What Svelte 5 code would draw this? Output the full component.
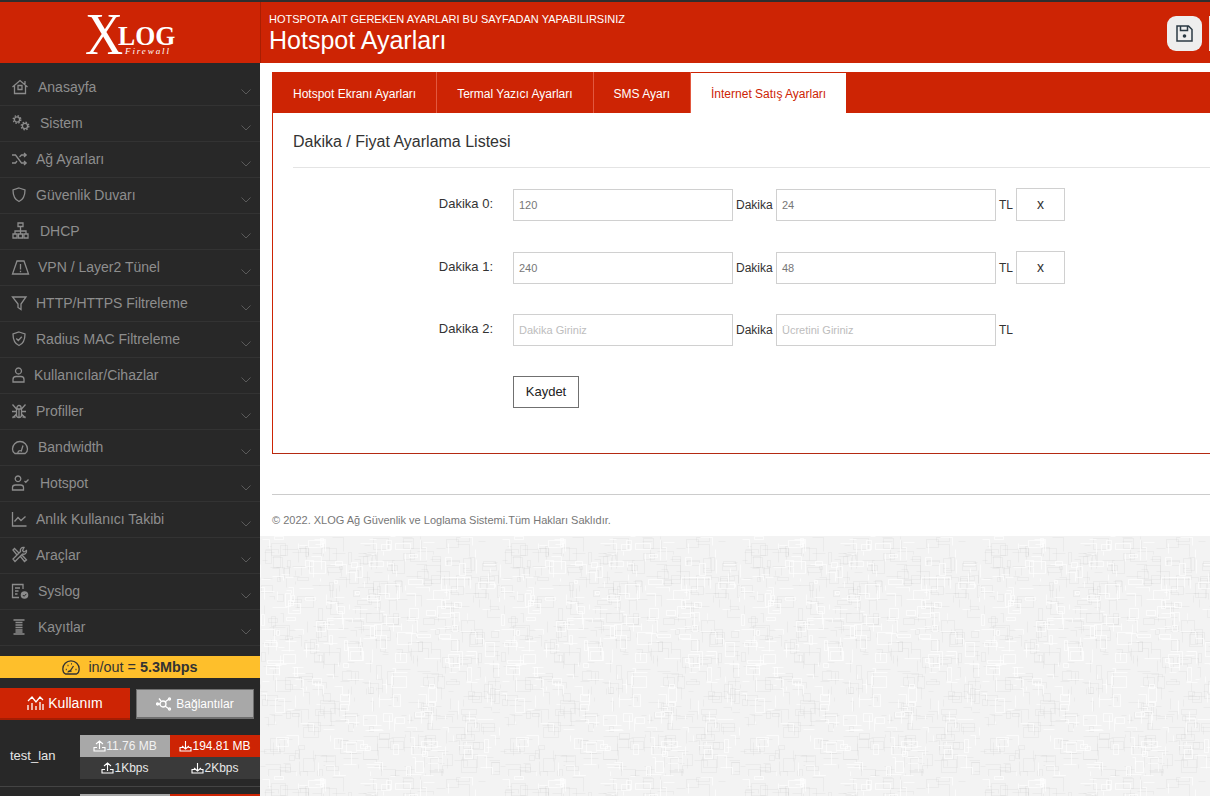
<script>
  const nav = [
    { t: 'Anasayfa', x: 38, i: 'home' }, { t: 'Sistem', x: 40, i: 'gears' }, { t: 'Ağ Ayarları', x: 36, i: 'shuffle' },
    { t: 'Güvenlik Duvarı', x: 36, i: 'shield' }, { t: 'DHCP', x: 40, i: 'net' }, { t: 'VPN / Layer2 Tünel', x: 38, i: 'warn' },
    { t: 'HTTP/HTTPS Filtreleme', x: 36, i: 'filter' }, { t: 'Radius MAC Filtreleme', x: 36, i: 'shieldc' },
    { t: 'Kullanıcılar/Cihazlar', x: 34, i: 'user' }, { t: 'Profiller', x: 36, i: 'bug' }, { t: 'Bandwidth', x: 38, i: 'gauge' },
    { t: 'Hotspot', x: 40, i: 'userc' }, { t: 'Anlık Kullanıcı Takibi', x: 36, i: 'chart' }, { t: 'Araçlar', x: 36, i: 'tools' },
    { t: 'Syslog', x: 38, i: 'doc' }, { t: 'Kayıtlar', x: 38, i: 'spool' }
  ];
  const paths = {
    home: 'M.5 8 8 1.500 15.500 8M2.500 6.500V14.500h11V6.500M13 2v3M6 6.500h4v4H6z',
    gears: '',
    shuffle: 'M0 4h3.500l6 8H14M0 12h3.500l1.500-2M7.500 6l2-2H14M12 2l2.200 2L12 6M12 10l2.200 2L12 14',
    shield: 'M7 1 13 3c0 5.500-1.500 9.500-6 11.500C2.500 12.500 1 8.500 1 3Z',
    net: 'M6 0h5v3.500H6zM1 11h4v4H1zM6.500 11h4v4h-4zM12 11h4v4h-4zM8.500 3.500V8M3 11V8h11v3M8.500 8v3',
    warn: 'M5 2h7l4.500 13H.5ZM8.500 5v5.500M8.500 11.800v1.500',
    filter: 'M.5 2h13.500L9 9v5.500L6 12.500V9Z',
    shieldc: 'M7 1 13 3c0 5.500-1 9.500-6 11.500C2 12.500 1 8.500 1 3ZM4.300 7.500 6.300 9.500 9.800 5.800',
    user: 'M6.500 1a3 3 0 1 0 .01 0M1 15v-2.500c0-2 1.500-3 3-3h5c1.500 0 3 1 3 3V15Z',
    bug: 'M4.500 6h5v6a2.500 2.500 0 0 1-5 0ZM5 6V4.500a2 2 0 0 1 4 0V6M.5 1.500 4.500 6M13.500 1.500 9.500 6M0 8.500h4.500M9.500 8.500H14M.5 15l4-4M13.500 15l-4-4M7 6v8M.5 14h3M10.500 14h3',
    gauge: 'M2.800 14.500C1 13.500.5 11.500.5 10a7.500 7.500 0 0 1 15 0c0 1.500-.5 3.500-2.300 4.500ZM6 14.500a2.200 2.200 0 0 1 3.300-2.500L11 6.500',
    userc: 'M6 1a2.800 2.800 0 1 0 .01 0M.5 15v-2.500c0-1.500 1.500-2.500 3-2.500h5c1.500 0 3 1 3 2.500V15ZM12.500 6l1.300 1.300 2.700-2.800',
    chart: 'M.5 1v14h14M2.500 10.500 6 6.500 9 9.500 13.500 5.500',
    tools: 'M1 3 2.500 1.500 7 6 5 8ZM12 .5a3 3 0 0 0-3.500 4L1 12l2 2.500 7.500-7.500a3 3 0 0 0 4-3.500L12 5 10.500 3.500ZM8.500 9.500 12.500 14.500 14.500 13 10 8',
    doc: 'M11 6V1.500H.5v13h6.500M3 5h5M3 8h3.500M3 11h2.500',
    spool: 'M1.500 1h11M1.500 15h11M3.500 3.500h7M3.500 6h7M3.500 8.500h7M3.500 11h7M3.500 13h7'
  };

  // Seeded random wall texture: short strokes and small boxes, in one tile.
  let s = 12345;
  const rnd = (n) => { s = (s * 16807) % 2147483647; return s % n; };
  const tile = (count) => {
    let d = '';
    for (let k = 0; k < count; k++) {
      const x = rnd(240), y = rnd(240), w = 3 + rnd(14), h = 3 + rnd(12), kind = rnd(4);
      if (kind === 0) d += `M${x}.5 ${y}.5h${w}`;
      else if (kind === 1) d += `M${x}.5 ${y}.5v${h}`;
      else if (kind === 2) d += `M${x}.5 ${y}.5h${w}v${h}`;
      else d += `M${x}.5 ${y}.5h${w}v${h}h-${w}z`;
    }
    return d;
  };
  const darkLines = tile(520);
  const lightLines = tile(320);
</script>

<div class="page">
  <aside class="side">
    <div class="logo">
      <span class="x">X</span><span class="log">LOG</span><span class="fw">Firewall</span>
    </div>
    <nav class="nav">
      {#each nav as n}
        <div class="item">
          <svg class="ic" viewBox="0 0 17 16" fill="none">
            {#if n.i === 'gears'}
              <circle cx="5" cy="4.500" r="2.600" /><circle cx="5" cy="4.500" r="3.800" class="teeth" />
              <circle cx="13" cy="11" r="2.600" /><circle cx="13" cy="11" r="3.800" class="teeth" />
            {:else}
              <path d={paths[n.i]} />
            {/if}
            {#if n.i === 'doc'}
              <circle cx="12.500" cy="12" r="3.800" class="solid" /><path d="M10.800 12l1.300 1.300 2.200-2.400" class="mini" />
            {/if}
          </svg>
          <span class="lbl" style="left:{n.x}px">{n.t}</span>
          <svg class="chev" viewBox="0 0 10 6" fill="none"><path d="M.5.500 5 5 9.500.5" /></svg>
        </div>
      {/each}
    </nav>
    <div class="rate">
      <svg width="18" height="15" viewBox="0 0 18 15" fill="none"><path d="M3.500 14C1.500 13 .8 11 .8 9a8.200 8.200 0 0 1 16.400 0c0 2-.7 4-2.700 5ZM7.500 12 11.500 6M3.800 9.500h1M5.500 5.500h1M9 3.800h1M13.500 9.500h1M6 12.500a2 2 0 0 1 3.500-1" /></svg>
      <span>in/out = <b>5.3Mbps</b></span>
    </div>
    <div class="btns">
      <button class="use">
        <svg width="17" height="16" viewBox="0 0 17 16" fill="none"><path d="M1 15v-5M5 15V8M9 15v-4M13 15V7M16 15v-6M1 6l4-4 4 5 4-5 3 3" /></svg>
        Kullanım
      </button>
      <button class="conn">
        <svg width="16" height="14" viewBox="0 0 16 14" fill="none"><circle cx="7" cy="7" r="3" /><path d="M4 7H1M9 5l4-3M9 9l4 3M5 4 3 1.500" /><circle cx="1.500" cy="7" r="1" /><circle cx="13.500" cy="2" r="1" /><circle cx="13.500" cy="12" r="1" /></svg>
        Bağlantılar
      </button>
    </div>
    <div class="stat">
      <div class="sname">test_lan</div>
      <div class="sgrid">
        <div class="c grey"><svg class="up" viewBox="0 0 13 12" fill="none"><path d="M6.500 9V1M3 4l3.500-3L10 4M4 7.500H1V11h11V7.500H9" /></svg>11.76 MB</div>
        <div class="c red"><svg class="up" viewBox="0 0 13 12" fill="none"><path d="M6.500 1v8M3 6l3.500 3L10 6M4 7.500H1V11h11V7.500H9.500" /></svg>194.81 MB</div>
        <div class="c dark"><svg class="up" viewBox="0 0 13 12" fill="none"><path d="M6.500 9V1M3 4l3.500-3L10 4M4 7.500H1V11h11V7.500H9" /></svg>1Kbps</div>
        <div class="c dark"><svg class="up" viewBox="0 0 13 12" fill="none"><path d="M6.500 1v8M3 6l3.500 3L10 6M4 7.500H1V11h11V7.500H9.500" /></svg>2Kbps</div>
      </div>
    </div>
    <div class="stat2">
      <div class="sgrid2"><div class="grey"></div><div class="red"></div></div>
    </div>
  </aside>

  <div class="main">
    <header class="top">
      <div class="ttl">
        <div class="sub">HOTSPOTA AIT GEREKEN AYARLARI BU SAYFADAN YAPABILIRSINIZ</div>
        <h1>Hotspot Ayarları</h1>
      </div>
      <div class="acts">
        <div class="save">
          <svg width="17" height="17" viewBox="0 0 17 17" fill="none"><path d="M1 1h11.500L16 4.500V16H1ZM4.500 1v4.500h7V1" /><circle cx="8.500" cy="11" r="1.800" fill="#2b3a44" /></svg>
        </div>
        <div class="save2"></div>
      </div>
    </header>

    <section class="white">
      <div class="card">
        <div class="tabs">
          <div class="tab">Hotspot Ekranı Ayarları</div>
          <div class="tab">Termal Yazıcı Ayarları</div>
          <div class="tab">SMS Ayarı</div>
          <div class="tab on">İnternet Satış Ayarları</div>
        </div>
        <div class="body">
          <h2>Dakika / Fiyat Ayarlama Listesi</h2>
          <div class="form">
            <div class="row">
              <div class="rl">Dakika 0:</div>
              <div class="inp">120</div><span class="u">Dakika</span>
              <div class="inp">24</div><span class="u tl">TL</span>
              <div class="xb">x</div>
            </div>
            <div class="row">
              <div class="rl">Dakika 1:</div>
              <div class="inp">240</div><span class="u">Dakika</span>
              <div class="inp">48</div><span class="u tl">TL</span>
              <div class="xb">x</div>
            </div>
            <div class="row">
              <div class="rl">Dakika 2:</div>
              <div class="inp ph">Dakika Giriniz</div><span class="u">Dakika</span>
              <div class="inp ph">Ücretini Giriniz</div><span class="u tl">TL</span>
            </div>
            <div class="kay">Kaydet</div>
          </div>
        </div>
      </div>
      <footer class="foot">© 2022. XLOG Ağ Güvenlik ve Loglama Sistemi.Tüm Hakları Saklıdır.</footer>
    </section>
    <svg class="tex" width="950" height="260">
      <defs>
        <pattern id="wall" width="240" height="240" patternUnits="userSpaceOnUse">
          <rect width="240" height="240" fill="#f3f3f3" />
          <path d={darkLines} fill="none" stroke="#000" stroke-opacity=".03" />
          <path d={lightLines} fill="none" stroke="#fff" stroke-opacity=".7" />
        </pattern>
      </defs>
      <rect width="950" height="260" fill="url(#wall)" />
    </svg>
  </div>
</div>

<style>
  :global(body) { margin: 0; background: #fff; }
  .page {
    display: flex; width: 1210px; height: 796px; overflow: hidden;
    font-family: "Liberation Sans", Arial, sans-serif; background: #fff;
  }
  .side { width: 260px; flex: none; background: #282828; display: flex; flex-direction: column; height: 796px; overflow: hidden; }
  .logo { height: 61px; margin-top: 2px; background: #cd2404; position: relative; flex: none; color: #fff; font-family: "Liberation Serif", serif; }
  .page::before { content: ""; position: absolute; left: 0; top: 0; width: 1210px; height: 2px; background: #2e2e2e; z-index: 3; }
  .x { position: absolute; left: 85px; top: 12px; font-size: 60px; line-height: 40px; transform: scaleX(.88); transform-origin: left; }
  .log { position: absolute; left: 118px; top: 24px; font-size: 28px; line-height: 20px; font-weight: 700; transform: scaleX(.92); transform-origin: left; }
  .fw { position: absolute; left: 125px; top: 44px; font-size: 9px; line-height: 10px; font-style: italic; letter-spacing: 1.900px; }
  .nav { padding-top: 7px; flex: none; height: 593px; box-sizing: border-box; }
  .item { height: 36px; box-sizing: border-box; border-bottom: 1px solid #333; position: relative; }
  .ic { position: absolute; left: 12px; top: 9px; width: 17px; height: 16px; overflow: visible; }
  .ic path, .ic circle { stroke: #8c8c8c; stroke-width: 1.300; }
  .ic .teeth { stroke-width: 1.400; stroke-dasharray: 1.500 1.500; }
  .ic .solid { fill: #8c8c8c; stroke: none; }
  .ic .mini { stroke: #282828; stroke-width: 1; }
  .lbl { position: absolute; top: 9px; font-size: 14px; line-height: 17px; color: #8e8e8e; white-space: nowrap; }
  .chev { position: absolute; left: 241px; top: 19px; width: 10px; height: 6px; }
  .chev path { stroke: #5a5a5a; }
  .rate { height: 22px; background: #febf2b; flex: none; display: flex; align-items: center; justify-content: center; gap: 8px; font-size: 14.400px; color: #333; }
  .rate svg path { stroke: #333; stroke-width: 1.300; }
  .btns { display: flex; align-items: flex-start; margin-top: 10px; height: 47px; flex: none; }
  button { font-family: inherit; margin: 0; display: flex; align-items: center; justify-content: center; color: #fff; padding: 0; box-sizing: border-box; }
  .use { width: 130px; height: 32px; background: #cd2404; border: 0; border-bottom: 2px solid #a51d03; font-size: 14px; gap: 4px; }
  .use svg path, .conn svg path, .conn svg circle { stroke: #fff; stroke-width: 1.300; }
  .conn { width: 118px; height: 30px; margin: 1px 0 0 6px; background: #a8a8a8; border: 1px solid #6f6f6f; border-bottom-width: 2px; font-size: 12px; gap: 4px; }
  .stat { display: flex; height: 44px; flex: none; }
  .sname { width: 80px; box-sizing: border-box; padding-left: 10px; font-size: 13px; line-height: 41px; color: #e6e6e6; }
  .sgrid { width: 180px; display: grid; grid-template-columns: 90px 90px; grid-template-rows: 22px 22px; }
  .c { display: flex; align-items: center; justify-content: center; font-size: 12px; color: #fff; }
  .c.grey { color: #f2f2f2; }
  .grey { background: #a8a8a8; }
  .red { background: #cd2404; }
  .dark { background: #3a3a3a; color: #e8e8e8; }
  .up { width: 13px; height: 12px; }
  .up path { stroke: #fff; stroke-width: 1.100; }
  .stat2 { margin-top: 7px; border-top: 1px solid #444; padding-top: 7px; flex: none; }
  .sgrid2 { margin-left: 80px; width: 180px; height: 22px; display: grid; grid-template-columns: 90px 90px; }
  .main { flex: 1; min-width: 0; display: flex; flex-direction: column; height: 796px; }
  .top { height: 61px; margin-top: 2px; background: #cd2404; border-left: 1px solid #a81e03; box-sizing: border-box; display: flex; justify-content: space-between; flex: none; color: #fff; overflow: hidden; }
  .ttl { padding: 11px 0 0 8px; }
  .sub { font-size: 11px; line-height: 13px; }
  h1 { margin: 0; font-size: 25px; line-height: 28px; font-weight: 400; }
  .acts { display: flex; gap: 7px; padding-top: 14px; }
  .save { width: 35px; height: 35px; background: #eee; border-radius: 9px; display: flex; align-items: center; justify-content: center; }
  .save path { stroke: #2b3a44; stroke-width: 1.500; }
  .save2 { width: 1px; height: 35px; background: #eee; }
  .white { background: #fff; padding: 9px 0 0 12px; height: 473px; box-sizing: border-box; flex: none; overflow: hidden; }
  .card { width: 960px; height: 382px; box-sizing: border-box; border: 1px solid #cd2404; border-top: 0; border-bottom-color: #b42a12; }
  .tabs { height: 41px; background: #cd2404; display: flex; margin: 0 -1px; }
  .tab { height: 41px; box-sizing: border-box; border-right: 1px solid #e2583f; color: #fff; font-size: 12px; line-height: 45px; padding: 0 20px; }
  .tab:first-child { padding-left: 21px; }
  .tab.on { background: #fff; color: #cd2404; margin-top: 1px; height: 40px; line-height: 42px; border: 0; }
  .body { padding: 0 20px; }
  h2 { margin: 0; height: 55px; box-sizing: border-box; border-bottom: 1px solid #e4e4e4; font-size: 16px; line-height: 57px; font-weight: 400; color: #333; }
  .form { padding-top: 20px; }
  .row { display: flex; align-items: flex-start; height: 33px; margin-bottom: 30px; font-size: 12px; line-height: 34px; color: #333; }
  .row:nth-child(2) { margin-bottom: 29px; }
  .rl { width: 220px; box-sizing: border-box; text-align: right; padding-right: 20px; font-size: 13px; line-height: 31px; }
  .inp { width: 220px; height: 32px; margin-top: 1px; box-sizing: border-box; border: 1px solid #d0d0d0; padding-left: 5px; font-size: 11px; line-height: 31px; color: #777; }
  .inp.ph { color: #bdbdbd; }
  .u { width: 43px; box-sizing: border-box; padding-left: 3px; }
  .u.tl { width: 20px; }
  .xb { width: 49px; height: 33px; box-sizing: border-box; border: 1px solid #d0d0d0; text-align: center; line-height: 30px; font-size: 14px; color: #333; }
  .kay { margin: 0 0 0 220px; width: 66px; height: 32px; box-sizing: border-box; border: 1px solid #707070; text-align: center; font-size: 13px; line-height: 29px; color: #222; }
  .foot { margin-top: 40px; height: 41px; width: 960px; border-top: 1px solid #ccc; font-size: 11px; line-height: 50px; color: #777; white-space: nowrap; }
  .tex { display: block; flex: none; }
</style>
